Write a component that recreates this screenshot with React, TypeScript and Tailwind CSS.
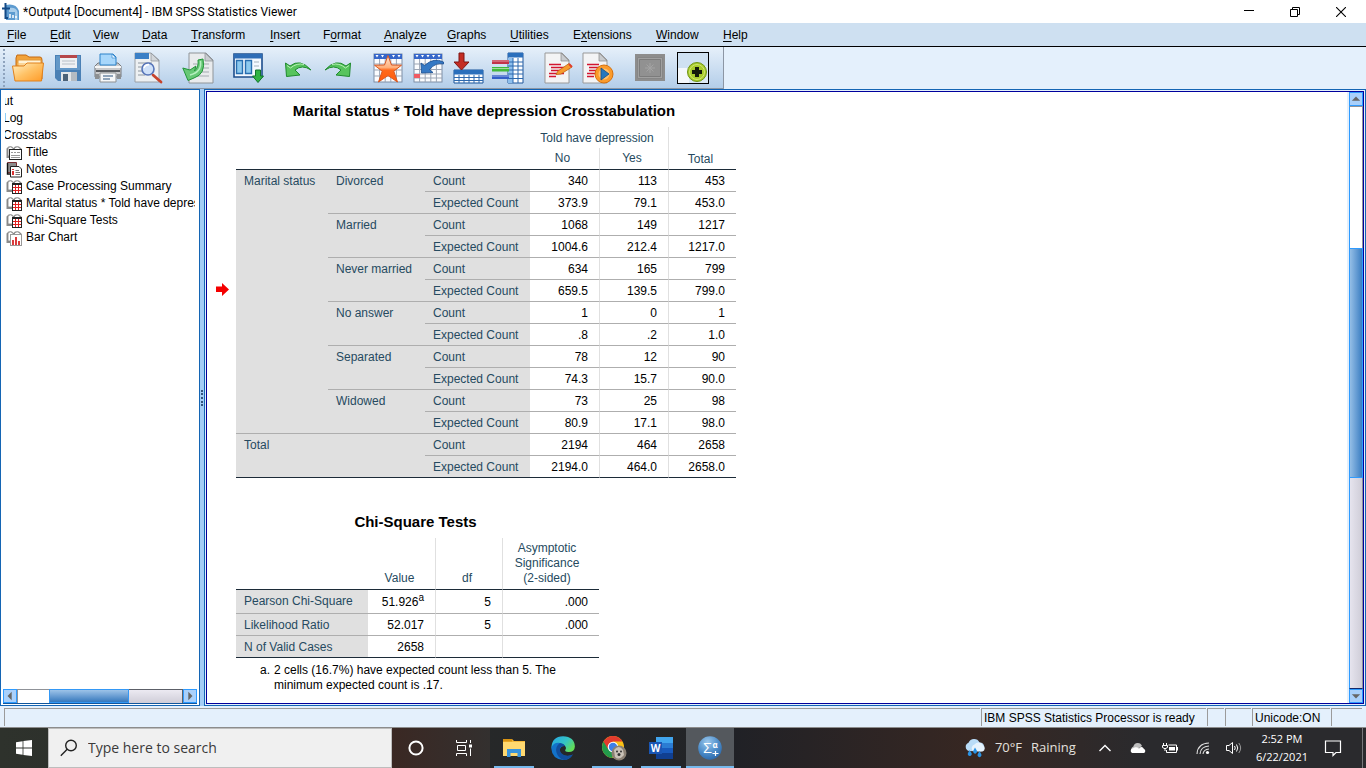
import type { ReactNode } from "react";

const menus = [
  { label: "File", key: 0, width: "w-[43px]" },
  { label: "Edit", key: 0, width: "w-[43px]" },
  { label: "View", key: 0, width: "w-[49px]" },
  { label: "Data", key: 0, width: "w-[49px]" },
  { label: "Transform", key: 0, width: "w-[79px]" },
  { label: "Insert", key: 0, width: "w-[53px]" },
  { label: "Format", key: 1, width: "w-[61px]" },
  { label: "Analyze", key: 0, width: "w-[63px]" },
  { label: "Graphs", key: 0, width: "w-[63px]" },
  { label: "Utilities", key: 0, width: "w-[63px]" },
  { label: "Extensions", key: 1, width: "w-[83px]" },
  { label: "Window", key: 0, width: "w-[67px]" },
  { label: "Help", key: 0, width: "w-[43px]" },
];

const crosstab = [
  { name: "Divorced", count: ["340", "113", "453"], expected: ["373.9", "79.1", "453.0"] },
  { name: "Married", count: ["1068", "149", "1217"], expected: ["1004.6", "212.4", "1217.0"] },
  { name: "Never married", count: ["634", "165", "799"], expected: ["659.5", "139.5", "799.0"] },
  { name: "No answer", count: ["1", "0", "1"], expected: [".8", ".2", "1.0"] },
  { name: "Separated", count: ["78", "12", "90"], expected: ["74.3", "15.7", "90.0"] },
  { name: "Widowed", count: ["73", "25", "98"], expected: ["80.9", "17.1", "98.0"] },
];

const icon32 = "h-8 w-8";

/* ---------- toolbar icons ---------- */

function OpenIcon() {
  return (
    <svg viewBox="0 0 32 32" className={icon32}>
      <path d="M4 6 L5 3 H14 L17 5 H28 Q30 5 30 8 V27 H4 Z" fill="#f2a33a" stroke="#c46a12" />
      <path d="M6 8 H29 V14 H6 Z" fill="#fff3d6" stroke="#e39a3c" />
      <path d="M5 12 H28" stroke="#f7b95a" />
      <path d="M0.5 14 H12 L15 11 H31.5 L29.5 29 H3 Z" fill="url(#openFront)" stroke="#e0811c" />
      <defs>
        <linearGradient id="openFront" x1="0" y1="0" x2="1" y2="1">
          <stop offset="0" stopColor="#fff2c8" />
          <stop offset="0.5" stopColor="#ffc266" />
          <stop offset="1" stopColor="#ff9a26" />
        </linearGradient>
      </defs>
    </svg>
  );
}

function SaveIcon() {
  return (
    <svg viewBox="0 0 32 32" className={icon32}>
      <path d="M3 3 H29 V29 H6 L3 26 Z" fill="#4a80b5" />
      <path d="M4 4 H28 V18 H4 Z" fill="#6398c8" />
      <path d="M8 3 H25 V16 H8 Z" fill="#eef1f4" />
      <path d="M8 3 H25 V6 H8 Z" fill="#b6474a" />
      <path d="M10 9 H23 M10 12 H23" stroke="#b9c0c7" />
      <path d="M9 20 H25 V29 H9 Z" fill="#e3e6e9" />
      <path d="M11 22 H16 V29 H11 Z" fill="#4b6278" />
      <path d="M19 20 H25 V29 H19 Z" fill="#b4bbc2" />
    </svg>
  );
}

function PrintIcon() {
  return (
    <svg viewBox="0 0 32 32" className={icon32}>
      <path d="M3 14 L6 11 H26 L29 14 V25 H3 Z" fill="#c9cacc" stroke="#77797c" />
      <path d="M8 2 H21 L24 5 V13 H8 Z" fill="#a8d7fb" stroke="#2c82c9" />
      <path d="M20 2 L24 6 H20 Z" fill="#e9f6ff" stroke="#2c82c9" strokeWidth="0.6" />
      <path d="M3 15 H29" stroke="#f6f6f6" strokeWidth="2" />
      <path d="M4 19 H28" stroke="#595c60" strokeWidth="2" />
      <path d="M8 21 H24 V30 H8 Z" fill="#f7f8f9" stroke="#8d9092" />
      <path d="M11 24 H21 M11 27 H18" stroke="#6f88a4" strokeWidth="1.4" />
      <path d="M3 22 H7 V27 H3 Z M25 22 H29 V27 H25 Z" fill="#8c8f92" />
    </svg>
  );
}

function PreviewIcon() {
  return (
    <svg viewBox="0 0 32 32" className={icon32}>
      <path d="M3 1 H19 L27 8 V30 H3 Z" fill="#edf0f2" stroke="#9aa0a6" />
      <path d="M3 1 H17 V7 H3 Z" fill="#3a7fc6" />
      <path d="M19 1 L27 9 H19 Z" fill="#d2d6da" stroke="#8c9196" strokeWidth="0.7" />
      <path d="M6 11 H20 M6 15 H12 M6 19 H11 M6 23 H13" stroke="#aeb5bc" strokeWidth="1.4" />
      <path d="M21 23 L29 30" stroke="#c7432c" strokeWidth="2.8" strokeLinecap="round" />
      <circle cx="16" cy="17" r="6" fill="#c9defa" fillOpacity="0.85" stroke="#5674b8" strokeWidth="1.6" />
      <path d="M12 16 Q13 12.5 17 12.6" stroke="#ffffff" strokeWidth="1.6" fill="none" />
    </svg>
  );
}

function ExportIcon() {
  return (
    <svg viewBox="0 0 32 32" className={icon32}>
      <path d="M7 1 H24 L31 8 V31 H7 Z" fill="#e9ebed" stroke="#8f9498" />
      <path d="M23 1 L31 9 H23 Z" fill="#c9ccd0" stroke="#888d92" strokeWidth="0.7" />
      <path d="M11 12 H27 M11 16 H27 M11 20 H27 M11 24 H27" stroke="#bcc1c5" strokeWidth="1.4" />
      <path
        d="M16 8 L21 7 Q24 22 12 26 L6 28.5 L0.8 16 L8 18 L14 14 L12.5 19 Q17 15 16 8 Z"
        fill="#67c876"
        stroke="#219538"
        strokeLinejoin="round"
      />
      <path d="M18.5 9 Q20 20 8 23" stroke="#b5efbf" strokeWidth="1.4" fill="none" />
    </svg>
  );
}

function RecallIcon() {
  return (
    <svg viewBox="0 0 32 32" className={icon32}>
      <path d="M2 2 H30 V25 H2 Z" fill="#f4f9ff" stroke="#1c4d8c" strokeWidth="1.6" />
      <path d="M2 2 H30 V6.5 H2 Z" fill="#2e6db6" />
      <path d="M4.5 8.5 H10.5 V21.5 H4.5 Z M13.5 8.5 H19.5 V21.5 H13.5 Z" fill="#8cc9ee" stroke="#276eb0" strokeWidth="1.4" />
      <path d="M22 10 H27 M22 14 H27" stroke="#c0cad4" strokeWidth="1.6" />
      <path d="M23.5 18 H28.5 V24 H31.5 L26 30.5 L20.5 24 H23.5 Z" fill="#2fb344" stroke="#11752a" />
    </svg>
  );
}

function UndoIcon({ flip = false }: { flip?: boolean }) {
  return (
    <svg viewBox="0 0 32 32" className={flip ? "h-8 w-8 -scale-x-100" : icon32}>
      <path
        d="M3.5 11 L8 14 Q18 6 29 18 Q20 12 13 18 L18 23 L4.5 24.5 Z"
        fill="#57c45d"
        stroke="#1f8a2e"
        strokeLinejoin="round"
      />
      <path d="M5 13.5 L8.5 16 Q15 10.5 22 12.5" stroke="#b7f0b4" fill="none" />
    </svg>
  );
}

function GridBase() {
  return (
    <>
      <rect x="2" y="2" width="28" height="28" fill="#fbfcfe" stroke="#7d8ea5" />
      <path d="M7.6 2 V30 M13.2 2 V30 M18.8 2 V30 M24.4 2 V30" stroke="#9ba5b4" />
      <rect x="2" y="2" width="28" height="5" fill="#3566c9" />
    </>
  );
}

function StarIcon() {
  return (
    <svg viewBox="0 0 32 32" className={icon32}>
      <GridBase />
      <path d="M3.5 3 H6.5 L5 5.5 Z M9 3 H12 L10.5 5.5 Z M20 3 H23 L21.5 5.5 Z M25.5 3 H28.5 L27 5.5 Z" fill="#fff" />
      <path d="M2 12 H30 M2 18 H30 M2 24 H30" stroke="#9ba5b4" />
      <path
        d="M16 3.5 L19.5 13 L29.5 13.2 L21.8 19.2 L25.5 30 L16 23.6 L6.5 30 L10.2 19.2 L2.5 13.2 L12.5 13 Z"
        fill="url(#starFill)"
        stroke="#d95720"
      />
      <defs>
        <linearGradient id="starFill" x1="0" y1="0" x2="0" y2="1">
          <stop offset="0" stopColor="#ffe6d3" />
          <stop offset="0.45" stopColor="#ffb07c" />
          <stop offset="0.55" stopColor="#ff6a1c" />
          <stop offset="1" stopColor="#ff5a0a" />
        </linearGradient>
      </defs>
    </svg>
  );
}

function GotoCaseIcon() {
  return (
    <svg viewBox="0 0 32 32" className={icon32}>
      <GridBase />
      <path d="M3.5 3 H6.5 L5 5.5 Z M9 3 H12 L10.5 5.5 Z M14.5 3 H17.5 L16 5.5 Z M20 3 H23 L21.5 5.5 Z M25.5 3 H28.5 L27 5.5 Z" fill="#fff" />
      <path d="M2 12 H30 M2 17.5 H30 M2 22 H30 M2 26 H30" stroke="#9ba5b4" />
      <path d="M2 22 H8 V26 H2 Z" fill="#ef5a63" />
      <path d="M9 11 L12.5 13.5 Q22 5 31.5 10 V12 Q24 10 17.5 17.5 L21 20.5 L9.5 21 Z" fill="#3478c4" stroke="#174d91" strokeWidth="0.8" />
    </svg>
  );
}

function InsertCasesIcon() {
  return (
    <svg viewBox="0 0 32 32" className={icon32}>
      <path d="M2 18 H31 V31 H2 Z" fill="#fff" stroke="#17539a" />
      <path d="M2 18 H31 V22.5 H2 Z" fill="#2a6fbc" />
      <path d="M2 25.5 H31 M2 28.5 H31 M7 23 V31 M12 23 V31 M17 23 V31 M22 23 V31 M27 23 V31" stroke="#2d69ae" />
      <path d="M7 1 H12 V10 H17 L9.5 18 L2 10 H7 Z" fill="#c42d24" stroke="#7e1712" />
    </svg>
  );
}

function VariablesIcon() {
  return (
    <svg viewBox="0 0 32 32" className={icon32}>
      <path d="M16 1 H31 V31 H16 Z" fill="#fff" stroke="#1e579c" />
      <path d="M16 1 H31 V5.5 H16 Z" fill="#2a6fbc" />
      <path d="M16 6 H21 V31 H16 Z" fill="#8ec0ee" />
      <path d="M16 10 H31 M16 14 H31 M16 18 H31 M16 22 H31 M16 26.5 H31 M21 6 V31 M26 6 V31" stroke="#2d69ae" />
      <path d="M0 8 H17 V12 H0 Z" fill="#c33349" />
      <path d="M0 15 H17 V19.5 H0 Z" fill="#42b83b" />
      <path d="M0 23 H17 V27 H0 Z" fill="#345fc9" />
      <path d="M0 9 H17 M0 16.5 H17 M0 24 H17" stroke="#ffffff" strokeOpacity="0.5" />
    </svg>
  );
}

function ScriptPage() {
  return (
    <>
      <path d="M3 1 H20 L27 8 V31 H3 Z" fill="#f3f4f5" stroke="#999" />
      <path d="M19 1 L27 9 H19 Z" fill="#c8cbce" stroke="#888" strokeWidth="0.7" />
      <path
        d="M7 12.5 H19 M9 15.5 H22 M9 18.5 H21 M7 21.5 H22 M7 24.5 H14"
        stroke="#d3152f"
        strokeWidth="1.4"
      />
    </>
  );
}

function EditScriptIcon() {
  return (
    <svg viewBox="0 0 32 32" className={icon32}>
      <ScriptPage />
      <path d="M16 19 L27 11.5 L30 15 L19 22 L14 22.5 Z" fill="#f89b2e" stroke="#bf6512" strokeWidth="0.8" />
      <path d="M27 12 L30 15" stroke="#e03e2d" strokeWidth="2" />
    </svg>
  );
}

function RunScriptIcon() {
  return (
    <svg viewBox="0 0 32 32" className={icon32}>
      <g transform="translate(-2 0)">
        <ScriptPage />
      </g>
      <circle cx="22" cy="22" r="9" fill="#fb9b2b" stroke="#d4700d" />
      <circle cx="22" cy="22" r="5.5" fill="#ffc16d" />
      <path d="M19 16 L27 22 L19 28 Z" fill="#2778bd" stroke="#124c86" strokeWidth="0.8" />
    </svg>
  );
}

function DisabledIcon() {
  return (
    <svg viewBox="0 0 32 32" className={icon32}>
      <path d="M1 2 H31 V29 H1 Z" fill="#8d8d8d" />
      <path d="M3.5 5.5 H28.5 V26.5 H3.5 Z" fill="#a0a0a0" stroke="#868686" />
      <path d="M5.5 7.5 H26.5 V24.5 H5.5 Z" fill="#919191" stroke="#7c7c7c" />
      <path d="M16 11 V21 M11 16 H21 M12.5 12.5 L19.5 19.5 M19.5 12.5 L12.5 19.5" stroke="#a3a3a3" />
    </svg>
  );
}

function DesignateIcon() {
  return (
    <svg viewBox="0 0 32 32" className={icon32}>
      <rect x="0.5" y="0.5" width="31" height="31" fill="#f4f8fc" stroke="#000" />
      <rect x="1" y="1" width="30" height="15" fill="#cfe1f2" />
      <rect x="12" y="14" width="19" height="17" fill="#dce9f5" />
      <circle cx="20" cy="20" r="9.5" fill="#a9cc2d" stroke="#6f9414" />
      <circle cx="20" cy="20" r="7.5" fill="none" stroke="#cfe66d" />
      <path d="M18 15 H22 V18 H25 V22 H22 V25 H18 V22 H15 V18 H18 Z" fill="#141a0a" />
    </svg>
  );
}

const toolGroups: { name: string; icon: ReactNode }[][] = [
  [
    { name: "Open", icon: <OpenIcon /> },
    { name: "Save", icon: <SaveIcon /> },
    { name: "Print", icon: <PrintIcon /> },
    { name: "Print preview", icon: <PreviewIcon /> },
  ],
  [{ name: "Export", icon: <ExportIcon /> }],
  [{ name: "Recall dialogs", icon: <RecallIcon /> }],
  [
    { name: "Undo", icon: <UndoIcon /> },
    { name: "Redo", icon: <UndoIcon flip /> },
  ],
  [
    { name: "Go to data", icon: <StarIcon /> },
    { name: "Go to case", icon: <GotoCaseIcon /> },
    { name: "Select last output", icon: <InsertCasesIcon /> },
    { name: "Variables", icon: <VariablesIcon /> },
  ],
  [
    { name: "Edit script", icon: <EditScriptIcon /> },
    { name: "Run script", icon: <RunScriptIcon /> },
  ],
];

/* ---------- outline tree icons ---------- */

function Book() {
  return (
    <>
      <path d="M0.5 3.5 L2.5 1.5 H6 L7.5 3 L9 1.5 H13 L15.5 3.5 V13 H0.5 Z" fill="#8c8c8c" />
      <path d="M2 3 Q4 0.5 7 3 V11 H2 Z M8.5 3 Q11 0.5 14 3 V8 H8.5 Z" fill="#fff" stroke="#808080" strokeWidth="0.8" />
    </>
  );
}

function TreeIcon({ kind }: { kind: string }) {
  return (
    <svg viewBox="0 0 16 16" className="h-4 w-4 shrink-0">
      {kind === "notes" ? <path d="M1.5 0.5 H10.5 V10.5 H1.5 Z" fill="#8c8c8c" stroke="#7a3034" /> : <Book />}
      {kind === "title" && (
        <>
          <rect x="3.5" y="4.5" width="12" height="10" fill="#fff" stroke="#222" />
          <path d="M5 7.5 H7 M8 7.5 H10 M11 7.5 H14 M5 10.5 H14 M5 12.5 H14" stroke="#999" />
        </>
      )}
      {kind === "notes" && (
        <>
          <path d="M1.5 1 V12 H5" fill="none" stroke="#111" strokeWidth="1.4" />
          <path d="M4.5 4.5 H13 L15.5 7 V15 H4.5 Z" fill="#fff" stroke="#222" />
          <path d="M7 7 V8 M7 9 V13" stroke="#d81e1e" strokeWidth="1.8" />
          <path d="M9.5 8.5 H13 M9.5 10.5 H14 M9.5 12.5 H14" stroke="#777" />
        </>
      )}
      {kind === "table" && (
        <>
          <rect x="6.5" y="4.5" width="9" height="10" fill="#fff" stroke="#222" />
          <path d="M6.5 5.5 H15.5" stroke="#222" />
          <path d="M7 8.5 H15 M7 11.5 H15 M9.5 6 V14 M12.5 6 V14" stroke="#e02020" />
        </>
      )}
      {kind === "chart" && (
        <>
          <rect x="4.5" y="4.5" width="11" height="11" fill="#fff" stroke="#999" />
          <path d="M7 15 V10 M10 15 V7 M13 15 V11" stroke="#d62728" strokeWidth="1.8" />
        </>
      )}
    </svg>
  );
}

const treeItems = [
  { kind: "title", label: "Title" },
  { kind: "notes", label: "Notes" },
  { kind: "table", label: "Case Processing Summary" },
  { kind: "table", label: "Marital status * Told have depression" },
  { kind: "table", label: "Chi-Square Tests" },
  { kind: "chart", label: "Bar Chart" },
];

function ArrowButton({ dir, name }: { dir: "up" | "down" | "left" | "right"; name: string }) {
  const paths = {
    up: "M1 8 L6 3 L11 8 Z",
    down: "M1 4 L6 9 L11 4 Z",
    left: "M8 1 L3 6 L8 11 Z",
    right: "M4 1 L9 6 L4 11 Z",
  };
  return (
    <button
      aria-label={name}
      className="flex h-[14px] w-[14px] shrink-0 items-center justify-center border border-[#2f9bff] bg-[#a9d0fb]"
    >
      <svg viewBox="0 0 12 12" className="h-2.5 w-2.5 shrink-0">
        <path d={paths[dir]} fill="#666" />
      </svg>
    </button>
  );
}

function OutlinePane() {
  return (
    <aside className="flex w-[200px] shrink-0 flex-col border border-[#1465b4] bg-white px-[2px] pt-[3px] pb-[1px]">
      <div className="mx-[2px] flex-1 overflow-hidden text-xs leading-[17px] whitespace-nowrap">
        {/* scrolled to the right, so the parents start outside the view */}
        <p className="-ml-7">Output</p>
        <p className="-ml-[2px]">Log</p>
        <p className="-ml-[2px]">Crosstabs</p>
        <ul className="pl-[1px]">
          {treeItems.map((item) => (
            <li key={item.label} className="flex h-[17px] items-center gap-1">
              <TreeIcon kind={item.kind} />
              <span>{item.label}</span>
            </li>
          ))}
        </ul>
      </div>
      <div className="flex h-[15px] shrink-0 border-b border-[#0f559c] bg-[#dcdce4]">
        <ArrowButton dir="left" name="Scroll left" />
        <div className="grow-[32] basis-0 border-t border-l border-[#8f9298] bg-white" />
        <div className="grow-[79] basis-0 border border-[#3498f5] bg-linear-to-b from-[#9dc3e8] to-[#3579bd]" />
        <div className="grow-[54] basis-0 border-t border-r border-[#5c6068] bg-linear-to-b from-[#eceaf2] to-[#cfcdd8]" />
        <ArrowButton dir="right" name="Scroll right" />
      </div>
    </aside>
  );
}

const rowHead = "bg-[#e0e0e0] border-b border-[#aeaeae] pt-[2px] pl-2 text-left align-top font-normal text-[#264a60]";
const cell = "border-b border-b-[#aeaeae] border-r border-r-[#e0e0e0] pt-[2px] pr-[11px] text-right last:border-r-0";
const colHead = "border-b border-b-[#1c2b38] border-r border-r-[#e0e0e0] text-center font-normal text-[#264a60]";

function ValueRow({ label, values, last = false }: { label: string; values: string[]; last?: boolean }) {
  return (
    <>
      <th scope="row" className={last ? `${rowHead} border-b-[#1c2b38]` : rowHead}>
        {label}
      </th>
      {values.map((v, i) => (
        <td key={i} className={last ? `${cell} border-b-[#1c2b38]!` : cell}>
          {v}
        </td>
      ))}
    </>
  );
}

function Crosstabulation() {
  return (
    <table className="w-[500px] table-fixed border-separate border-spacing-0 text-xs leading-[19px]">
      <caption className="pr-1 pb-2 text-[15px] leading-4 font-bold">
        Marital status * Told have depression Crosstabulation
      </caption>
      <colgroup>
        <col className="w-[92px]" />
        <col className="w-[97px]" />
        <col className="w-[105px]" />
        <col className="w-[70px]" />
        <col className="w-[69px]" />
        <col className="w-[67px]" />
      </colgroup>
      <thead>
        <tr>
          <td colSpan={3} rowSpan={2} className="border-b border-[#1c2b38]" />
          <th colSpan={2} className="border-r border-[#e0e0e0] pt-[2px] pr-1 text-center font-normal text-[#264a60]">
            Told have depression
          </th>
          <th rowSpan={2} className={`${colHead} border-r-0 pr-1 align-bottom`}>Total</th>
        </tr>
        <tr>
          <th className={`${colHead} py-[1px] pr-1`}>No</th>
          <th className={`${colHead} py-[1px] pr-1`}>Yes</th>
        </tr>
      </thead>
      <tbody>
        {crosstab.map((row, i) => [
          <tr key={row.name}>
            {i === 0 && (
              <th rowSpan={12} scope="rowgroup" className={rowHead}>
                Marital status
              </th>
            )}
            <th rowSpan={2} scope="rowgroup" className={rowHead}>
              {row.name}
            </th>
            <ValueRow label="Count" values={row.count} />
          </tr>,
          <tr key={`${row.name}-expected`}>
            <ValueRow label="Expected Count" values={row.expected} />
          </tr>,
        ])}
        <tr>
          <th colSpan={2} rowSpan={2} scope="rowgroup" className={`${rowHead} border-b-[#1c2b38]`}>
            Total
          </th>
          <ValueRow label="Count" values={["2194", "464", "2658"]} />
        </tr>
        <tr>
          <ValueRow label="Expected Count" values={["2194.0", "464.0", "2658.0"]} last />
        </tr>
      </tbody>
    </table>
  );
}

function ChiSquare() {
  return (
    <div className="mt-9 w-[363px] text-xs">
      <table className="w-full table-fixed border-separate border-spacing-0 leading-[19px]">
        <caption className="pr-1 pb-2 text-[15px] leading-4 font-bold">Chi-Square Tests</caption>
        <colgroup>
          <col className="w-[132px]" />
          <col className="w-[68px]" />
          <col className="w-[67px]" />
          <col className="w-[96px]" />
        </colgroup>
        <thead>
          <tr className="h-[52px] align-bottom leading-[15px]">
            <td className="border-b border-[#1c2b38]" />
            <th className={`${colHead} pr-1 pb-[3px]`}>Value</th>
            <th className={`${colHead} pr-1 pb-[3px]`}>df</th>
            <th className={`${colHead} border-r-0 pr-2 pb-[3px]`}>
              Asymptotic Significance <span className="whitespace-nowrap">(2-sided)</span>
            </th>
          </tr>
        </thead>
        <tbody>
          <tr className="h-6">
            <th scope="row" className={`${rowHead} align-middle`}>Pearson Chi-Square</th>
            <td className={cell}>
              51.926<sup className="text-[10px] leading-none">a</sup>
            </td>
            <td className={cell}>5</td>
            <td className={cell}>.000</td>
          </tr>
          <tr>
            <ValueRow label="Likelihood Ratio" values={["52.017", "5", ".000"]} />
          </tr>
          <tr>
            <ValueRow label="N of Valid Cases" values={["2658", "", ""]} last />
          </tr>
        </tbody>
      </table>
      <p className="flex gap-1 pt-[5px] pr-6 pl-6 leading-[15px]">
        <span>a.</span>
        <span>2 cells (16.7%) have expected count less than 5. The minimum expected count is .17.</span>
      </p>
    </div>
  );
}

function ViewerPane() {
  return (
    <main className="flex min-w-0 flex-1 border border-[#1465b4] bg-[#e4f0fc] p-[1px]">
      <div className="flex min-w-0 flex-1 border border-[#00009c] bg-white">
        <div className="flex min-w-0 flex-1 overflow-hidden pt-[11px]">
          <div className="w-[29px] shrink-0 pt-[180px] pl-[9px]">
            <svg viewBox="0 0 14 14" className="h-[14px] w-[14px]">
              <path d="M0 3.5 H6 V0 L13 6.5 L6 13 V9 H0 Z" fill="#f40000" />
            </svg>
          </div>
          <div>
            <Crosstabulation />
            <ChiSquare />
          </div>
        </div>
        <div className="flex w-4 shrink-0 flex-col border-l-2 border-[#e4f0fc] bg-[#dcdce4]">
          <ArrowButton dir="up" name="Scroll up" />
          <div className="grow-[141] basis-0 border-t border-r border-l border-t-[#8f9298] border-r-[#8f9298] border-l-[#2f9bff] bg-white" />
          <div className="grow-[229] basis-0 border border-[#2f9bff] bg-linear-to-r from-[#94bee6] to-[#3a7ec2]" />
          <div className="grow-[211] basis-0 border-r border-b border-l border-r-[#8f9298] border-b-[#14286a] border-l-[#2f9bff] bg-linear-to-r from-[#e6e4ee] to-[#cfcdd8]" />
          <ArrowButton dir="down" name="Scroll down" />
        </div>
      </div>
    </main>
  );
}

/* ---------- taskbar ---------- */

function TaskButton({ name, children, open = false, active = false }: {
  name: string;
  children: ReactNode;
  open?: boolean;
  active?: boolean;
}) {
  return (
    <button
      aria-label={name}
      className={`relative flex h-10 w-12 shrink-0 items-center justify-center ${active ? "bg-[#54585d]" : ""}`}
    >
      {children}
      {open && (
        <span className={`absolute bottom-0 h-[2px] bg-[#76b9ed] ${active ? "inset-x-0" : "inset-x-1"}`} />
      )}
    </button>
  );
}

function Taskbar() {
  return (
    <footer className="flex h-10 shrink-0 items-center bg-linear-to-r from-[#2e322c] from-0% via-[#222327] via-55% to-[#2a2a2d] to-100% font-['Open_Sans',sans-serif] text-white">
      <button aria-label="Start" className="flex h-10 w-12 shrink-0 items-center justify-center">
        <svg viewBox="0 0 16 16" className="h-4 w-4" fill="#fff">
          <path d="M0 2.2 L6.6 1.2 V7.5 H0 Z M7.4 1.1 L16 0 V7.5 H7.4 Z M0 8.4 H6.6 V14.8 L0 13.8 Z M7.4 8.4 H16 V16 L7.4 14.9 Z" />
        </svg>
      </button>
      <label className="flex h-10 w-[344px] shrink-0 items-center gap-2.5 border border-[#bdbdbd] bg-[#f0f0f0] pl-[11px] text-[#2b2b2b]">
        <svg viewBox="0 0 18 18" className="h-[18px] w-[18px] shrink-0" fill="none" stroke="#222" strokeWidth="1.4">
          <circle cx="11" cy="6.5" r="5.3" />
          <path d="M7.2 10.3 L0.8 16.8" />
        </svg>
        <input
          type="text"
          aria-label="Search"
          placeholder="Type here to search"
          className="min-w-0 flex-1 bg-transparent text-sm placeholder:text-[#3a3a3a] focus:outline-none"
        />
      </label>
      <div className="flex h-10 shrink-0 bg-linear-to-r from-[#3a2823] from-0% to-[#33302f] to-100% pr-0.5">
        <TaskButton name="Cortana">
          <svg viewBox="0 0 16 16" className="h-4 w-4">
            <circle cx="8" cy="8" r="6.6" fill="none" stroke="#fff" strokeWidth="2" />
          </svg>
        </TaskButton>
        <TaskButton name="Task view">
          <svg viewBox="0 0 16 16" className="h-4 w-4" fill="none" stroke="#fff" strokeWidth="1">
            <path d="M0.5 0 V2.5 H10.5 V0 M0.5 16 V13.5 H10.5 V16 M1.5 5.5 H9.5 V10.5 H1.5 Z M14.5 0 V3 M14.5 8.5 V16" />
            <path d="M13 4.5 H16 V7.5 H13 Z" fill="#fff" stroke="none" />
          </svg>
        </TaskButton>
      </div>
      <div className="flex shrink-0 gap-[1px]">
        <TaskButton name="File Explorer" open>
          <svg viewBox="0 0 24 20" className="h-5 w-6">
            <path d="M1 1 H10 L12 3 H23 V18 H1 Z" fill="#f5b93a" />
            <path d="M1 1 H10 V3.5 H1 Z" fill="#d99413" />
            <path d="M1 4 H23 V18 H1 Z" fill="#ffd970" />
            <path d="M5 11 H19 V19 H15.5 V15 H8.5 V19 H5 Z" fill="#3894dd" />
          </svg>
        </TaskButton>
        <TaskButton name="Edge">
          <svg viewBox="0 0 24 24" className="h-6 w-6">
            <defs>
              <linearGradient id="edgeTop" x1="0" y1="0" x2="1" y2="0.6">
                <stop offset="0" stopColor="#25a5e8" />
                <stop offset="0.6" stopColor="#35c4c4" />
                <stop offset="1" stopColor="#62dd57" />
              </linearGradient>
            </defs>
            <path d="M0.3 12 Q1 0.2 12 0.2 Q23.5 0.6 23.9 10.5 Q23.6 16 17.5 16 Q13 15.8 14.5 13.5 Q16 11.5 13 9 Q6 5.5 0.3 12 Z" fill="url(#edgeTop)" />
            <path d="M0.2 12 Q2.5 6 9 7 Q13 7.8 14 10 Q9.8 9.6 8.7 13.8 Q8.4 20 16.5 20 Q20 19.8 21.8 18.4 Q18.5 24 12 24 Q1 23 0.2 12 Z" fill="#1372c9" />
            <path d="M9 7 Q3.8 10.5 5.5 16.5 Q7.2 22.5 13 24 Q18.5 23.8 21.8 18.4 Q17 20.8 12.5 18.8 Q8.6 16.6 8.9 12.8 Q9.8 9.6 14 10 Q13 7.5 9 7 Z" fill="#114d9c" />
          </svg>
        </TaskButton>
        <TaskButton name="Chrome" open>
          <svg viewBox="0 0 26 26" className="ml-1 h-[26px] w-[26px]">
            <circle cx="12" cy="12" r="11" fill="#fbc116" />
            <path d="M12 12 L2.5 6.5 A11 11 0 0 0 11.5 23 Z" fill="#229a4b" />
            <path d="M12 6.5 H21.5 A11 11 0 0 0 2.5 6.5 L7 14 Z" fill="#e33b2e" />
            <circle cx="12" cy="12" r="5.3" fill="#fff" />
            <circle cx="12" cy="12" r="4.2" fill="#3f7fe8" />
            <circle cx="18" cy="18" r="7.5" fill="#8a8074" />
            <path d="M13 15 Q18 9 22 15 L23 20 Q18 26 14 22 Z" fill="#c9c2b8" />
            <circle cx="16" cy="16.5" r="1" fill="#333" />
            <circle cx="20" cy="16.5" r="1" fill="#333" />
            <circle cx="18" cy="19.5" r="1.5" fill="#333" />
          </svg>
        </TaskButton>
        <TaskButton name="Word" open>
          <svg viewBox="0 0 24 22" className="h-[22px] w-6">
            <path d="M7 0 H24 V6 H7 Z" fill="#41a5ee" />
            <path d="M7 6 H24 V11 H7 Z" fill="#2b7cd3" />
            <path d="M7 11 H24 V16 H7 Z" fill="#185abd" />
            <path d="M7 16 H24 V22 H7 Z" fill="#103f91" />
            <rect x="0" y="5" width="13" height="12" fill="#1a56b4" />
            <text x="6.5" y="14.5" textAnchor="middle" fontSize="10" fontWeight="bold" fill="#fff">W</text>
          </svg>
        </TaskButton>
        <TaskButton name="SPSS Statistics" open active>
          <svg viewBox="0 0 24 24" className="h-6 w-6">
            <defs>
              <radialGradient id="spssBall" cx="0.4" cy="0.25" r="0.8">
                <stop offset="0" stopColor="#9cc8ec" />
                <stop offset="0.6" stopColor="#4b8bc8" />
                <stop offset="1" stopColor="#2a66a8" />
              </radialGradient>
            </defs>
            <circle cx="12" cy="12" r="11.8" fill="url(#spssBall)" />
            <text x="9.5" y="17" textAnchor="middle" fontSize="15" fill="#fff">Σ</text>
            <text x="17" y="12" textAnchor="middle" fontSize="8" fontWeight="bold" fill="#fff">α</text>
            <path d="M14.5 17.5 H20.5 M17.5 15 V20" stroke="#fff" strokeWidth="1.2" />
          </svg>
        </TaskButton>
      </div>
      <div className="flex h-10 flex-1 items-center justify-end bg-linear-to-r from-[#202126] from-0% via-[#372722] via-38% to-[#2a2a2d] to-65%">
        <svg viewBox="0 0 22 20" className="mr-[9px] h-5 w-[22px] shrink-0">
          <path d="M5 13 A4.3 4.3 0 0 1 4.5 4.8 A6 6 0 0 1 15.5 4.5 A4.6 4.6 0 0 1 17 13.5 Z" fill="#b9dcf7" />
          <path d="M9 13 A3.8 3.8 0 0 1 10.5 6.5 A5 5 0 0 1 19 7.5 A3.3 3.3 0 0 1 18.5 13.5 Z" fill="#e6f3fd" />
          <path d="M5.5 12 L7.5 15 A2 2 0 1 1 4 15 Z M11 9.5 L12.8 12.5 A2 2 0 1 1 9.4 12.5 Z M15.5 13 L17.2 16 A2 2 0 1 1 13.8 16 Z" fill="#2a94e6" />
        </svg>
        <span className="mr-[22px] flex gap-[9px] text-[13px] text-[#e4e0de]">
          <span>70°F</span>
          <span>Raining</span>
        </span>
        <button aria-label="Show hidden icons" className="mr-[18px]">
          <svg viewBox="0 0 14 14" className="h-[14px] w-[14px]" fill="none" stroke="#fff" strokeWidth="1.4">
            <path d="M1.5 10 L7 4.5 L12.5 10" />
          </svg>
        </button>
        <svg viewBox="0 0 16 12" className="mr-4 h-3 w-4 shrink-0">
          <path d="M3 10 A3 3 0 0 1 3.4 4.5 A4.5 4.5 0 0 1 12 4 L7 7.5 Z" fill="#bdbdbd" />
          <path d="M2 11 A2.5 2.5 0 0 1 3 6.3 Q6 4 9 6.5 Q12 3.5 14 7 A2.2 2.2 0 0 1 14 11 Z" fill="#fff" />
        </svg>
        <svg viewBox="0 0 16 12" className="mr-[18px] h-3 w-4 shrink-0" fill="none" stroke="#fff">
          <path d="M6.5 3 H14.5 V10.5 H4.5 V8 M1.5 1 V3.5 M4.5 1 V3.5 M0.5 3.5 H5.5 V5.5 Q3 8 0.5 5.5 Z M3 6.5 V9" />
          <path d="M7 5 H13 V8.5 H7 Z" fill="#fff" stroke="none" />
          <path d="M15.5 5 V8.5" />
        </svg>
        <svg viewBox="0 0 14 14" className="mr-4 h-[14px] w-[14px] shrink-0" fill="none" stroke="#ddd" strokeWidth="1.1">
          <path d="M1 13 Q1.5 2.5 13 2 M4 13 Q4.5 5.5 13 5 M7 13 Q7.5 8.5 13 8" />
          <circle cx="11.5" cy="11.5" r="1.6" fill="#fff" stroke="none" />
        </svg>
        <svg viewBox="0 0 16 14" className="mr-[14px] h-[14px] w-4 shrink-0" fill="none" stroke="#fff">
          <path d="M0.5 4.5 H3 L6.5 1.5 V12.5 L3 9.5 H0.5 Z M8.5 5 Q10 7 8.5 9 M10.5 3.5 Q13 7 10.5 10.5" />
          <path d="M12.8 2 Q16.5 7 12.8 12" stroke="#999" />
        </svg>
        <div className="mr-4 shrink-0 text-center text-[11px] leading-[18px]">
          <p>2:52 PM</p>
          <p>6/22/2021</p>
        </div>
        <button aria-label="Notifications" className="mr-5">
          <svg viewBox="0 0 18 18" className="h-[18px] w-[18px]" fill="none" stroke="#fff" strokeWidth="1.2">
            <path d="M1.5 2 H16.5 V13.5 H12 L9 16.5 V13.5 H1.5 Z" />
          </svg>
        </button>
        <span className="h-10 w-1 border-l border-[#77777a]" />
      </div>
    </footer>
  );
}

export default function App() {
  return (
    <div className="flex h-screen flex-col overflow-hidden bg-white font-['Liberation_Sans',Arial,sans-serif] text-black">
      <header className="flex h-[23px] shrink-0 items-center text-xs">
        <svg viewBox="0 0 18 18" className="mr-[3px] ml-0.5 h-[18px] w-[18px] shrink-0">
          <path d="M4 2 Q14 0 17 8 V17 H4 Z" fill="#5d9bd0" />
          <path d="M7 5 Q14 4 15.5 9 V17 H13 V9 H7 Z" fill="#a9cdea" />
          <path d="M3.5 0 V15 H6 M0 5.5 H8" fill="none" stroke="#134a86" strokeWidth="2" />
          <path d="M8 15 V11 M11 15 V12 M14 15 V13" stroke="#fff" strokeWidth="1.5" />
        </svg>
        <h1 className="flex-1 font-['Roboto',sans-serif]">*Output4 [Document4] - IBM SPSS Statistics Viewer</h1>
        <button aria-label="Minimize" className="flex h-full w-[46px] items-center justify-center">
          <svg viewBox="0 0 10 10" className="h-2.5 w-2.5"><path d="M0 3.5 H10" stroke="#000" /></svg>
        </button>
        <button aria-label="Restore" className="flex h-full w-[46px] items-center justify-center">
          <svg viewBox="0 0 10 10" className="h-2.5 w-2.5" fill="none" stroke="#000">
            <path d="M0.5 2.5 H7.5 V9.5 H0.5 Z M2.5 2.5 V0.5 H9.5 V7.5 H7.5" />
          </svg>
        </button>
        <button aria-label="Close" className="mr-[2px] flex h-full w-[46px] items-center justify-center">
          <svg viewBox="0 0 10 10" className="h-2.5 w-2.5"><path d="M0 0 L10 10 M10 0 L0 10" stroke="#000" strokeWidth="1.1" /></svg>
        </button>
      </header>

      <nav className="flex h-6 shrink-0 items-center border-b border-black bg-[#cee0f1] pl-[7px] text-xs">
        {menus.map((m) => (
          <button key={m.label} className={`${m.width} shrink-0 text-left`}>
            {m.label.slice(0, m.key)}
            <span className="underline underline-offset-2">{m.label[m.key]}</span>
            {m.label.slice(m.key + 1)}
          </button>
        ))}
      </nav>

      <div className="flex h-[42px] shrink-0 bg-[#e4f0fc]">
        <div className="flex items-center border-r border-b border-[#8c96a4] bg-linear-to-b from-[#e6f0fa] to-[#b4cee9] pr-3 pl-[3px]">
          <span className="mr-[3px] h-[38px] border-l-2 border-dotted border-[#8ea3bd]" />
          <div className="flex gap-[10px]">
            {toolGroups.map((group, i) => (
              <div key={i} className="flex">
                {group.map((tool) => (
                  <button key={tool.name} aria-label={tool.name} className="flex h-10 w-10 items-center justify-center">
                    {tool.icon}
                  </button>
                ))}
              </div>
            ))}
            <div className="flex gap-[3px]">
              <button aria-label="Insert heading" className="flex h-10 w-11 items-center justify-center">
                <DisabledIcon />
              </button>
              <button aria-label="Designate window" className="flex h-10 w-9 items-center justify-center">
                <DesignateIcon />
              </button>
            </div>
          </div>
        </div>
      </div>

      <div className="flex min-h-0 flex-1 bg-[#e4f0fc]">
        <OutlinePane />
        <div className="flex w-1 shrink-0 flex-col items-center justify-center bg-[#a4cdf6]">
          <span className="h-4 border-l-2 border-dotted border-[#33567f]" />
        </div>
        <ViewerPane />
      </div>

      <div className="flex h-[22px] shrink-0 gap-[1px] border-b border-[#8c8c8c] bg-[#e4f0fc] pt-[2px] pr-1 pb-[1px] pl-1 text-xs leading-[18px]">
        <div className="flex-1 border-t border-l border-[#9b9b9b]" />
        <div className="w-[225px] border-t border-l border-[#9b9b9b] pl-[2px]">
          IBM SPSS Statistics Processor is ready
        </div>
        <div className="w-[17px] border-t border-l border-[#9b9b9b]" />
        <div className="w-[26px] border-t border-l border-[#9b9b9b]" />
        <div className="w-[78px] border-t border-l border-[#9b9b9b] pl-[2px]">Unicode:ON</div>
        <div className="w-[31px] border-t border-l border-[#9b9b9b]" />
      </div>

      <Taskbar />
    </div>
  );
}
